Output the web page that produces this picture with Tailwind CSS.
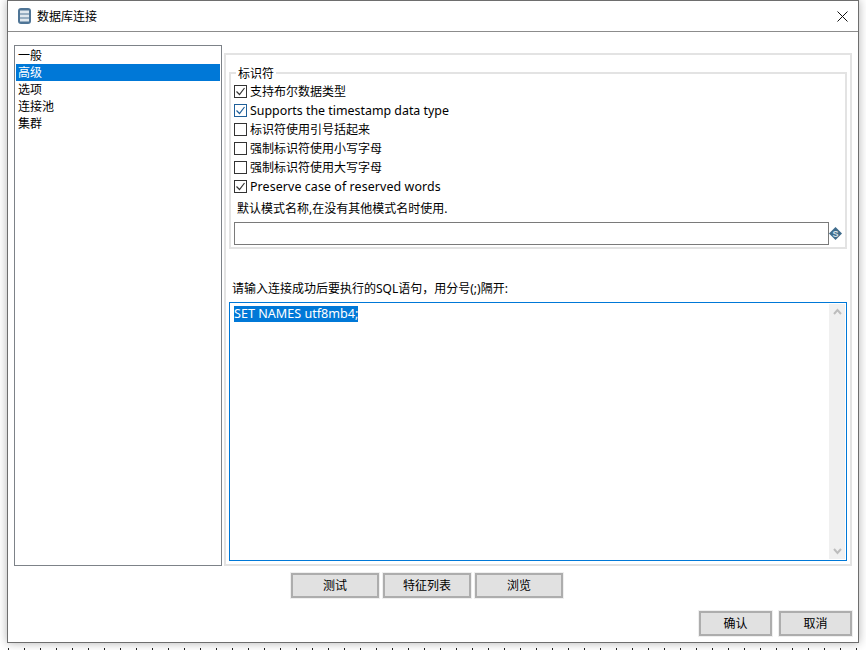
<!DOCTYPE html>
<html lang="zh-CN">
  <head>
    <meta charset="UTF-8" />
    <title>数据库连接</title>
    <script src="https://cdn.jsdelivr.net/npm/@tailwindcss/browser@4"></script>
  </head>
  <body class="relative w-[866px] h-[650px] overflow-hidden bg-white font-['Noto_Sans','Noto_Sans_CJK_SC',sans-serif] text-[12px] leading-[17px] text-black">
    <!-- dotted line of the window behind -->
    <div class="absolute left-[8px] right-0 top-[648px] h-[2px] bg-[repeating-linear-gradient(90deg,#222_0,#222_1px,transparent_1px,transparent_16px)]"></div>

    <div class="absolute left-[7px] top-0 w-[852px] h-[643px] flex flex-col bg-white border border-[#6e6e6e] shadow-[0_0_9px_rgba(0,0,0,0.3)]">
      <!-- title bar -->
      <div class="h-[31px] shrink-0 flex items-center border-b border-[#8c8c8c] pl-[10px] pr-[10px]">
        <svg class="w-[13px] h-[16px] mr-[6px]" viewBox="0 0 13 16">
          <rect width="13" height="16" rx="3" fill="#4f7596" />
          <rect x="2" y="2.5" width="9" height="3" fill="#dfe7ee" />
          <rect x="2" y="6.5" width="9" height="3" fill="#dfe7ee" />
          <rect x="2" y="10.5" width="9" height="3" fill="#dfe7ee" />
        </svg>
        <span>数据库连接</span>
        <svg class="ml-auto w-[11px] h-[11px]" viewBox="0 0 11 11" stroke="#111" stroke-width="1" fill="none">
          <path d="M0.5 0.5l10 10M10.5 0.5l-10 10" />
        </svg>
      </div>

      <!-- main -->
      <div class="flex pl-[6px] pr-[6px] pt-[13px] gap-[2px] h-[522px] shrink-0">
        <ul class="w-[208px] h-[521px] border border-[#7d8288] p-[1px] shrink-0">
          <li class="h-[17px] pl-[2px]">一般</li>
          <li class="h-[17px] pl-[2px] bg-[#0078d7] text-white">高级</li>
          <li class="h-[17px] pl-[2px]">选项</li>
          <li class="h-[17px] pl-[2px]">连接池</li>
          <li class="h-[17px] pl-[2px]">集群</li>
        </ul>

        <div class="mt-[8px] w-[628px] h-[513px] border-2 border-[#e3e3e3] pl-[3px] pr-[3px] pt-[17px]">
          <!-- group -->
          <fieldset class="relative h-[177px] border-2 border-[#e3e3e3] pl-[3px]">
            <legend class="absolute left-[5px] top-[-9px] bg-white px-[2px] leading-[17px]">标识符</legend>
            <div class="flex flex-col pt-[8px]">
              <label class="h-[19px] flex items-center gap-[3px]">
                <span class="w-[13px] h-[13px] border border-[#333] flex items-center justify-center">
                  <svg class="w-[11px] h-[11px]" viewBox="0 0 11 11" fill="none" stroke="#333" stroke-width="1.2"><path d="M1.5 5.5l3 3 5-6.5" /></svg>
                </span>
                <span>支持布尔数据类型</span>
              </label>
              <label class="h-[19px] flex items-center gap-[3px]">
                <span class="w-[13px] h-[13px] border border-[#1f5f99] flex items-center justify-center">
                  <svg class="w-[11px] h-[11px]" viewBox="0 0 11 11" fill="none" stroke="#1f5f99" stroke-width="1.2"><path d="M1.5 5.5l3 3 5-6.5" /></svg>
                </span>
                <span class="text-[12.4px]">Supports the timestamp data type</span>
              </label>
              <label class="h-[19px] flex items-center gap-[3px]">
                <span class="w-[13px] h-[13px] border border-[#333]"></span>
                <span>标识符使用引号括起来</span>
              </label>
              <label class="h-[19px] flex items-center gap-[3px]">
                <span class="w-[13px] h-[13px] border border-[#333]"></span>
                <span>强制标识符使用小写字母</span>
              </label>
              <label class="h-[19px] flex items-center gap-[3px]">
                <span class="w-[13px] h-[13px] border border-[#333]"></span>
                <span>强制标识符使用大写字母</span>
              </label>
              <label class="h-[19px] flex items-center gap-[3px]">
                <span class="w-[13px] h-[13px] border border-[#333] flex items-center justify-center">
                  <svg class="w-[11px] h-[11px]" viewBox="0 0 11 11" fill="none" stroke="#333" stroke-width="1.2"><path d="M1.5 5.5l3 3 5-6.5" /></svg>
                </span>
                <span class="text-[12.4px] tracking-[0.1px]">Preserve case of reserved words</span>
              </label>
            </div>
            <div class="mt-[4px] pl-[3px] h-[17px]">默认模式名称,在没有其他模式名时使用.</div>
            <div class="mt-[5px] flex items-center">
              <div class="w-[595px] h-[23px] border border-[#7a7a7a] shrink-0"></div>
              <svg class="w-[13px] h-[13px]" viewBox="0 0 13 13">
                <path d="M6.5 0L13 6.5 6.5 13 0 6.5z" fill="#3f6c8c" />
                <text x="6.5" y="9.6" text-anchor="middle" font-size="9" font-weight="700" font-family="Liberation Sans" fill="#d5e0e8">S</text>
              </svg>
            </div>
          </fieldset>

          <div class="mt-[31px] pl-[3px] h-[17px]">请输入连接成功后要执行的SQL语句，用分号(;)隔开:</div>

          <!-- sql box -->
          <div class="mt-[5px] h-[259px] border border-[#0078d7] flex justify-between p-[1px]">
            <div class="pl-[3px] pt-[1px]">
              <span class="inline-block h-[16px] leading-[15px] bg-[#0078d7] text-white text-[12.6px]">SET NAMES utf8mb4;</span>
            </div>
            <div class="w-[16px] bg-[#f0f0f0] flex flex-col justify-between items-center py-[4px]">
              <svg class="w-[9px] h-[7px]" viewBox="0 0 9 7" fill="none" stroke="#bdbdbd" stroke-width="2"><path d="M1 6l3.5-4L8 6" /></svg>
              <svg class="w-[9px] h-[7px]" viewBox="0 0 9 7" fill="none" stroke="#bdbdbd" stroke-width="2"><path d="M1 1l3.5 4L8 1" /></svg>
            </div>
          </div>
        </div>
      </div>

      <!-- middle buttons -->
      <div class="flex gap-[4px] pl-[283px] mt-[19px]">
        <button class="w-[88px] h-[25px] bg-[#e1e1e1] border-2 border-[#adadad] outline outline-[#efefef]">测试</button>
        <button class="w-[88px] h-[25px] bg-[#e1e1e1] border-2 border-[#adadad] outline outline-[#efefef]">特征列表</button>
        <button class="w-[88px] h-[25px] bg-[#e1e1e1] border-2 border-[#adadad] outline outline-[#efefef]">浏览</button>
      </div>

      <!-- bottom buttons -->
      <div class="flex justify-end gap-[7px] pr-[6px] mt-[13px]">
        <button class="w-[73px] h-[25px] bg-[#e1e1e1] border-2 border-[#adadad] outline outline-[#efefef]">确认</button>
        <button class="w-[73px] h-[25px] bg-[#e1e1e1] border-2 border-[#adadad] outline outline-[#efefef]">取消</button>
      </div>
    </div>
  </body>
</html>
